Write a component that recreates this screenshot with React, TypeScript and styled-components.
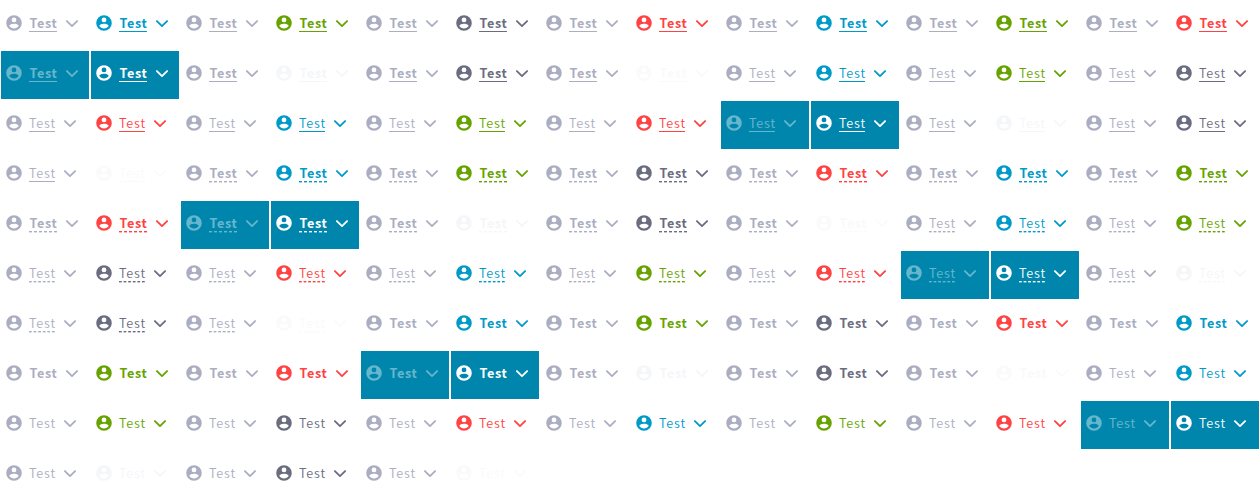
import React from "react";
import styled, { createGlobalStyle, css } from "styled-components";

const GlobalStyle = createGlobalStyle`
  body { margin: 0; background: #fff; overflow: hidden; }
`;

type Line = "solid" | "dashed" | "none";

const Grid = styled.main`
  display: grid;
  grid-template-columns: repeat(14, 90px);
  grid-auto-rows: 50px;
  width: 1260px;
  height: 500px;
`;

const Cell = styled.div<{ $fill?: string }>`
  box-sizing: border-box;
  margin: 1px;
  padding-left: 4px;
  display: flex;
  align-items: flex-start;
  background: ${(p) => p.$fill ?? "transparent"};
`;

const Link = styled.a<{ $color: string; $strong: boolean; $faded: boolean }>`
  display: inline-flex;
  align-items: center;
  height: 20px;
  margin-top: 12px;
  color: ${(p) => p.$color};
  opacity: ${(p) => (p.$faded ? 0.4 : 1)};
  font-family: "Noto Sans CJK JP", "Noto Sans", sans-serif;
  font-size: 12.6px;
  line-height: 20px;
  letter-spacing: ${(p) => (p.$strong ? 0.7 : 0.8)}px;
  font-weight: ${(p) => (p.$strong ? 600 : 350)};
`;

const solidLine = css`
  background: linear-gradient(currentColor, currentColor) 0 18px / 100% 1px no-repeat;
`;

/* A full row of dashes with a softer row below it. */
const dashedLine = css<{ $strong: boolean }>`
  --soft: color-mix(in srgb, currentColor 40%, transparent);
  --step: ${(p) => (p.$strong ? 5 : 4.6)}px;
  background:
    linear-gradient(90deg, currentColor 3px, transparent 3px) 0 18px / var(--step) 1px repeat-x,
    linear-gradient(90deg, var(--soft) 3px, transparent 3px) 0 19px / var(--step) 1px repeat-x;
`;

const Label = styled.span<{ $line: Line; $strong: boolean }>`
  margin: 0 6px;
  width: ${(p) => (p.$strong ? 28 : 26)}px;
  height: 20px;
  text-indent: ${(p) => (p.$strong ? 0.4 : 0)}px;
  white-space: nowrap;
  ${(p) => p.$line === "solid" && solidLine}
  ${(p) => p.$line === "dashed" && dashedLine}
`;

const Icon = styled.svg`
  width: 18px;
  height: 18px;
  flex: none;
  fill: currentColor;
`;

const Account = () => (
  <Icon viewBox="0 0 24 24">
    <path d="M12 1.600a10.400 10.400 0 1 0 0 20.800 10.400 10.400 0 0 0 0-20.800zm0 3.100a3.200 3.200 0 1 1 0 6.400 3.200 3.200 0 0 1 0-6.400zm0 14.700c-2.600 0-4.900-1.300-6.200-3.300 0-2.100 4.100-3.200 6.200-3.200s6.200 1.100 6.200 3.200c-1.300 2-3.600 3.300-6.200 3.300z" />
  </Icon>
);

const ChevronIcon = styled(Icon)`
  fill: none;
  stroke: currentColor;
  stroke-width: 2.4;
  stroke-linecap: round;
  stroke-linejoin: round;
`;

const Chevron = () => (
  <ChevronIcon viewBox="0 0 24 24">
    <path d="M5.200 9.400 12 16.200 18.800 9.400" />
  </ChevronIcon>
);

const tones: { color: string; fill?: string }[] = [
  { color: "#009ac9" },
  { color: "#66a300" },
  { color: "#6a6c80" },
  { color: "#ff4242" },
  { color: "#009ac9" },
  { color: "#66a300" },
  { color: "#ff4242" },
  { color: "#ffffff", fill: "#0086ad" },
  { color: "#f5f6f9" },
  { color: "#6a6c80" },
  { color: "#fafafb" },
];

const groups: { line: Line; strong: boolean }[] = [
  { line: "solid", strong: true },
  { line: "solid", strong: false },
  { line: "dashed", strong: true },
  { line: "dashed", strong: false },
  { line: "none", strong: true },
  { line: "none", strong: false },
];

export default function App() {
  return (
    <>
      <GlobalStyle />
      <Grid>
        {groups.flatMap(({ line, strong }, g) =>
          tones.flatMap(({ color, fill }, t) =>
            [true, false].map((disabled) => (
              <Cell key={`${g}-${t}-${disabled}`} $fill={fill}>
                <Link
                  $color={disabled && !fill ? "#abaec1" : color}
                  $strong={strong}
                  $faded={disabled && !!fill}
                >
                  <Account />
                  <Label $line={line} $strong={strong}>Test</Label>
                  <Chevron />
                </Link>
              </Cell>
            )),
          ),
        )}
      </Grid>
    </>
  );
}
